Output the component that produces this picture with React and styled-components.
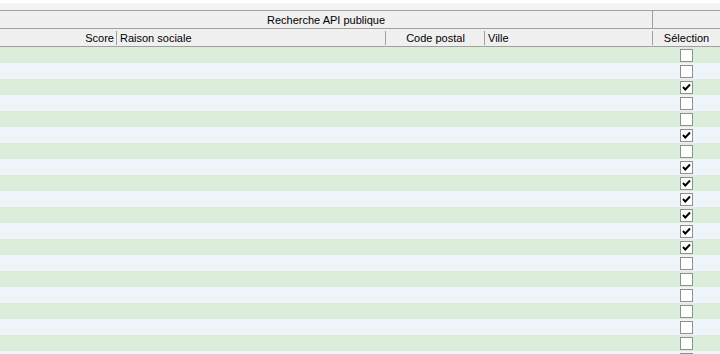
import React from "react";
import styled, { createGlobalStyle } from "styled-components";

const GlobalStyle = createGlobalStyle`
  html, body {
    margin: 0;
    padding: 0;
    background: #ffffff;
  }
  body {
    font-family: "Liberation Sans", Arial, sans-serif;
    font-size: 11px;
    color: #000;
  }
`;

const COLS = "117px 269px 99px 168px 1fr";

const checked = [2, 5, 7, 8, 9, 10, 11, 12];
const rows = Array.from({ length: 20 }, (_, i) => checked.includes(i));

const App = () => {
  return (
    <>
      <GlobalStyle />
      <Page>
        <TopStrip />
        <Header>
          <GroupRow>
            <HeadCell align="center">Recherche API publique</HeadCell>
            <HeadCell last />
          </GroupRow>
          <ColumnRow>
            <ColCell align="flex-end">Score</ColCell>
            <ColCell align="flex-start">Raison sociale</ColCell>
            <ColCell align="center">Code postal</ColCell>
            <ColCell align="flex-start">Ville</ColCell>
            <ColCell align="center" last>
              Sélection
            </ColCell>
          </ColumnRow>
        </Header>
        <Body>
          {rows.map((isChecked, i) => (
            <Row key={i} odd={i % 2 === 1}>
              <span />
              <span />
              <span />
              <span />
              <SelectCell>
                <Box>
                  {isChecked && (
                    <svg width="11" height="11" viewBox="0 0 11 11">
                      <path d="M2 5 L4.3 7.5 L9 2.5" fill="none" stroke="#000" strokeWidth="1.9" />
                    </svg>
                  )}
                </Box>
              </SelectCell>
            </Row>
          ))}
        </Body>
      </Page>
    </>
  );
};

export default App;

const Page = styled.div`
  width: 720px;
  height: 354px;
  overflow: hidden;
  background: #ffffff;
`;

const TopStrip = styled.div`
  height: 7px;
  margin-top: 3px;
  background: #f4f4f4;
`;

const Header = styled.div`
  background: #f0f0f0;
  border-top: 1px solid #a0a0a0;
`;

const GroupRow = styled.div`
  display: grid;
  grid-template-columns: 653px 1fr;
  height: 18px;
  border-bottom: 1px solid #a0a0a0;
  box-sizing: border-box;
`;

const HeadCell = styled.div`
  display: flex;
  align-items: center;
  justify-content: ${(p) => p.align || "center"};
  border-right: ${(p) => (p.last ? "none" : "1px solid #a0a0a0")};
  padding: 0 2px;
  white-space: nowrap;
`;

const ColumnRow = styled.div`
  display: grid;
  grid-template-columns: ${COLS};
  height: 18px;
  border-bottom: 1px solid #a0a0a0;
  box-sizing: border-box;
`;

const ColCell = styled.div`
  display: flex;
  align-items: center;
  justify-content: ${(p) => p.align};
  padding: 0 3px 0 3px;
  white-space: nowrap;
  position: relative;
  &::after {
    content: "";
    display: ${(p) => (p.last ? "none" : "block")};
    position: absolute;
    right: 0;
    top: 2px;
    bottom: 1px;
    width: 1px;
    background: #a0a0a0;
  }
`;

const Body = styled.div`
  display: flex;
  flex-direction: column;
`;

const Row = styled.div`
  display: grid;
  grid-template-columns: ${COLS};
  height: 16px;
  flex-shrink: 0;
  background: ${(p) => (p.odd ? "#eef4fa" : "#dbeedb")};
`;

const SelectCell = styled.div`
  display: flex;
  align-items: center;
  justify-content: center;
`;

const Box = styled.div`
  width: 13px;
  height: 13px;
  box-sizing: border-box;
  border: 1px solid #8f8f8f;
  background: #ffffff;
  display: flex;
  align-items: center;
  justify-content: center;
`;
